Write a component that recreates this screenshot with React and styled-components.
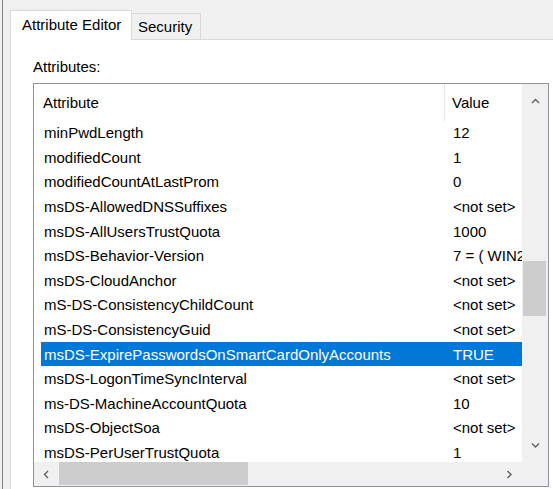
import styled, { createGlobalStyle } from "styled-components"

const GlobalStyle = createGlobalStyle`
html, body {
  margin: 0;
  padding: 0;
  background: #f0f0f0;
  overflow: hidden;
}
body {
  font-family: "Liberation Sans", Arial, sans-serif;
  font-size: 15px;
  color: #000;
}
`

const rows = [
  ["minPwdLength", "12"],
  ["modifiedCount", "1"],
  ["modifiedCountAtLastProm", "0"],
  ["msDS-AllowedDNSSuffixes", "<not set>"],
  ["msDS-AllUsersTrustQuota", "1000"],
  ["msDS-Behavior-Version", "7 = ( WIN2016 )"],
  ["msDS-CloudAnchor", "<not set>"],
  ["mS-DS-ConsistencyChildCount", "<not set>"],
  ["mS-DS-ConsistencyGuid", "<not set>"],
  ["msDS-ExpirePasswordsOnSmartCardOnlyAccounts", "TRUE"],
  ["msDS-LogonTimeSyncInterval", "<not set>"],
  ["ms-DS-MachineAccountQuota", "10"],
  ["msDS-ObjectSoa", "<not set>"],
  ["msDS-PerUserTrustQuota", "1"],
]

const SELECTED = 9

function Chevron({ dir }) {
  const paths = {
    up: "M1 5 L4.5 1.5 L8 5",
    down: "M1 1.5 L4.5 5 L8 1.5",
    left: "M5 1 L1.5 4.5 L5 8",
    right: "M1.5 1 L5 4.5 L1.5 8",
  }
  const horiz = dir === "left" || dir === "right"
  return (
    <svg width={horiz ? 7 : 9} height={horiz ? 9 : 7} viewBox={horiz ? "0 0 7 9" : "0 0 9 7"}>
      <path d={paths[dir]} fill="none" stroke="#606060" strokeWidth="1.4" />
    </svg>
  )
}

export default function App() {
  return (
    <>
      <GlobalStyle />
      <Frame>
        <TabStrip>
          <ActiveTab>Attribute Editor</ActiveTab>
          <Tab>Security</Tab>
        </TabStrip>
        <Panel>
          <Label>Attributes:</Label>
          <ListBox>
            <Content>
              <HeaderRow>
                <HeaderCell>Attribute</HeaderCell>
                <HeaderCell $value>Value</HeaderCell>
              </HeaderRow>
              {rows.map(([name, value], i) => (
                <Row key={name} $selected={i === SELECTED}>
                  <NameCell>{name}</NameCell>
                  <ValueCell>{value}</ValueCell>
                </Row>
              ))}
            </Content>
            <VScroll>
              <VButton><Chevron dir="up" /></VButton>
              <VTrack>
                <VThumb $top={143} $size={55} />
              </VTrack>
              <VButton><Chevron dir="down" /></VButton>
            </VScroll>
            <HScroll>
              <HButton><Chevron dir="left" /></HButton>
              <HTrack>
                <HThumb $size={189} />
              </HTrack>
              <HButton><Chevron dir="right" /></HButton>
            </HScroll>
            <Corner />
          </ListBox>
        </Panel>
      </Frame>
    </>
  )
}

const Frame = styled.div`
display: flex;
flex-direction: column;
height: 489px;
margin-left: 2px;
border-left: 1px solid #858585;
padding-left: 7px;
box-sizing: border-box;
`

const TabStrip = styled.div`
display: flex;
align-items: flex-end;
height: 40px;
padding-top: 10px;
box-sizing: border-box;
margin-bottom: -1px;
position: relative;
z-index: 1;
`

const ActiveTab = styled.div`
width: 122px;
height: 30px;
box-sizing: border-box;
background: #fff;
border: 1px solid #d9d9d9;
border-bottom: none;
padding-left: 11px;
display: flex;
align-items: center;
padding-bottom: 3px;
white-space: nowrap;
`

const Tab = styled.div`
width: 69px;
height: 26px;
margin-bottom: 1px;
box-sizing: border-box;
background: #f0f0f0;
border: 1px solid #d9d9d9;
border-left: none;
border-bottom: none;
padding-left: 6px;
display: flex;
align-items: center;
white-space: nowrap;
`

const Panel = styled.div`
flex: 1;
background: #fff;
border-top: 1px solid #d9d9d9;
border-left: 1px solid #d9d9d9;
padding: 18px 0 0 22px;
overflow: hidden;
`

const Label = styled.div`
line-height: 18px;
height: 18px;
margin-bottom: 7px;
`

const ListBox = styled.div`
width: 516px;
height: 404px;
box-sizing: border-box;
border: 1px solid #8f949c;
display: grid;
grid-template-columns: 1fr 26px;
grid-template-rows: 1fr 24px;
overflow: hidden;
`

const Content = styled.div`
padding-left: 7px;
overflow: hidden;
white-space: nowrap;
`

const HeaderRow = styled.div`
display: flex;
height: 36.5px;
`

const HeaderCell = styled.div`
display: flex;
align-items: center;
flex: none;
width: ${p => (p.$value ? "140px" : "403px")};
padding-left: ${p => (p.$value ? "7px" : "2px")};
box-sizing: border-box;
border-left: ${p => (p.$value ? "1px solid #e5e5e5" : "none")};
`

const Row = styled.div`
display: flex;
height: 24.6px;
align-items: center;
background: ${p => (p.$selected ? "#0078d7" : "transparent")};
color: ${p => (p.$selected ? "#fff" : "#000")};
`

const NameCell = styled.div`
flex: none;
width: 403px;
padding-left: 3px;
box-sizing: border-box;
overflow: hidden;
`

const ValueCell = styled.div`
flex: none;
width: 140px;
padding-left: 9px;
box-sizing: border-box;
`

const VScroll = styled.div`
background: #f0f0f0;
display: flex;
flex-direction: column;
`

const VButton = styled.div`
height: 34px;
flex: none;
display: flex;
align-items: center;
justify-content: center;
padding-left: 1px;
`

const VTrack = styled.div`
flex: 1;
padding: 0 2px 0 1px;
`

const VThumb = styled.div`
margin-top: ${p => p.$top}px;
height: ${p => p.$size}px;
background: #cdcdcd;
`

const HScroll = styled.div`
background: #f0f0f0;
display: flex;
`

const HButton = styled.div`
width: 25px;
flex: none;
display: flex;
align-items: center;
justify-content: center;
`

const HTrack = styled.div`
flex: 1;
padding: 0 0 1px 0;
`

const HThumb = styled.div`
width: ${p => p.$size}px;
height: 100%;
background: #cdcdcd;
`

const Corner = styled.div`
background: #f0f0f0;
`
